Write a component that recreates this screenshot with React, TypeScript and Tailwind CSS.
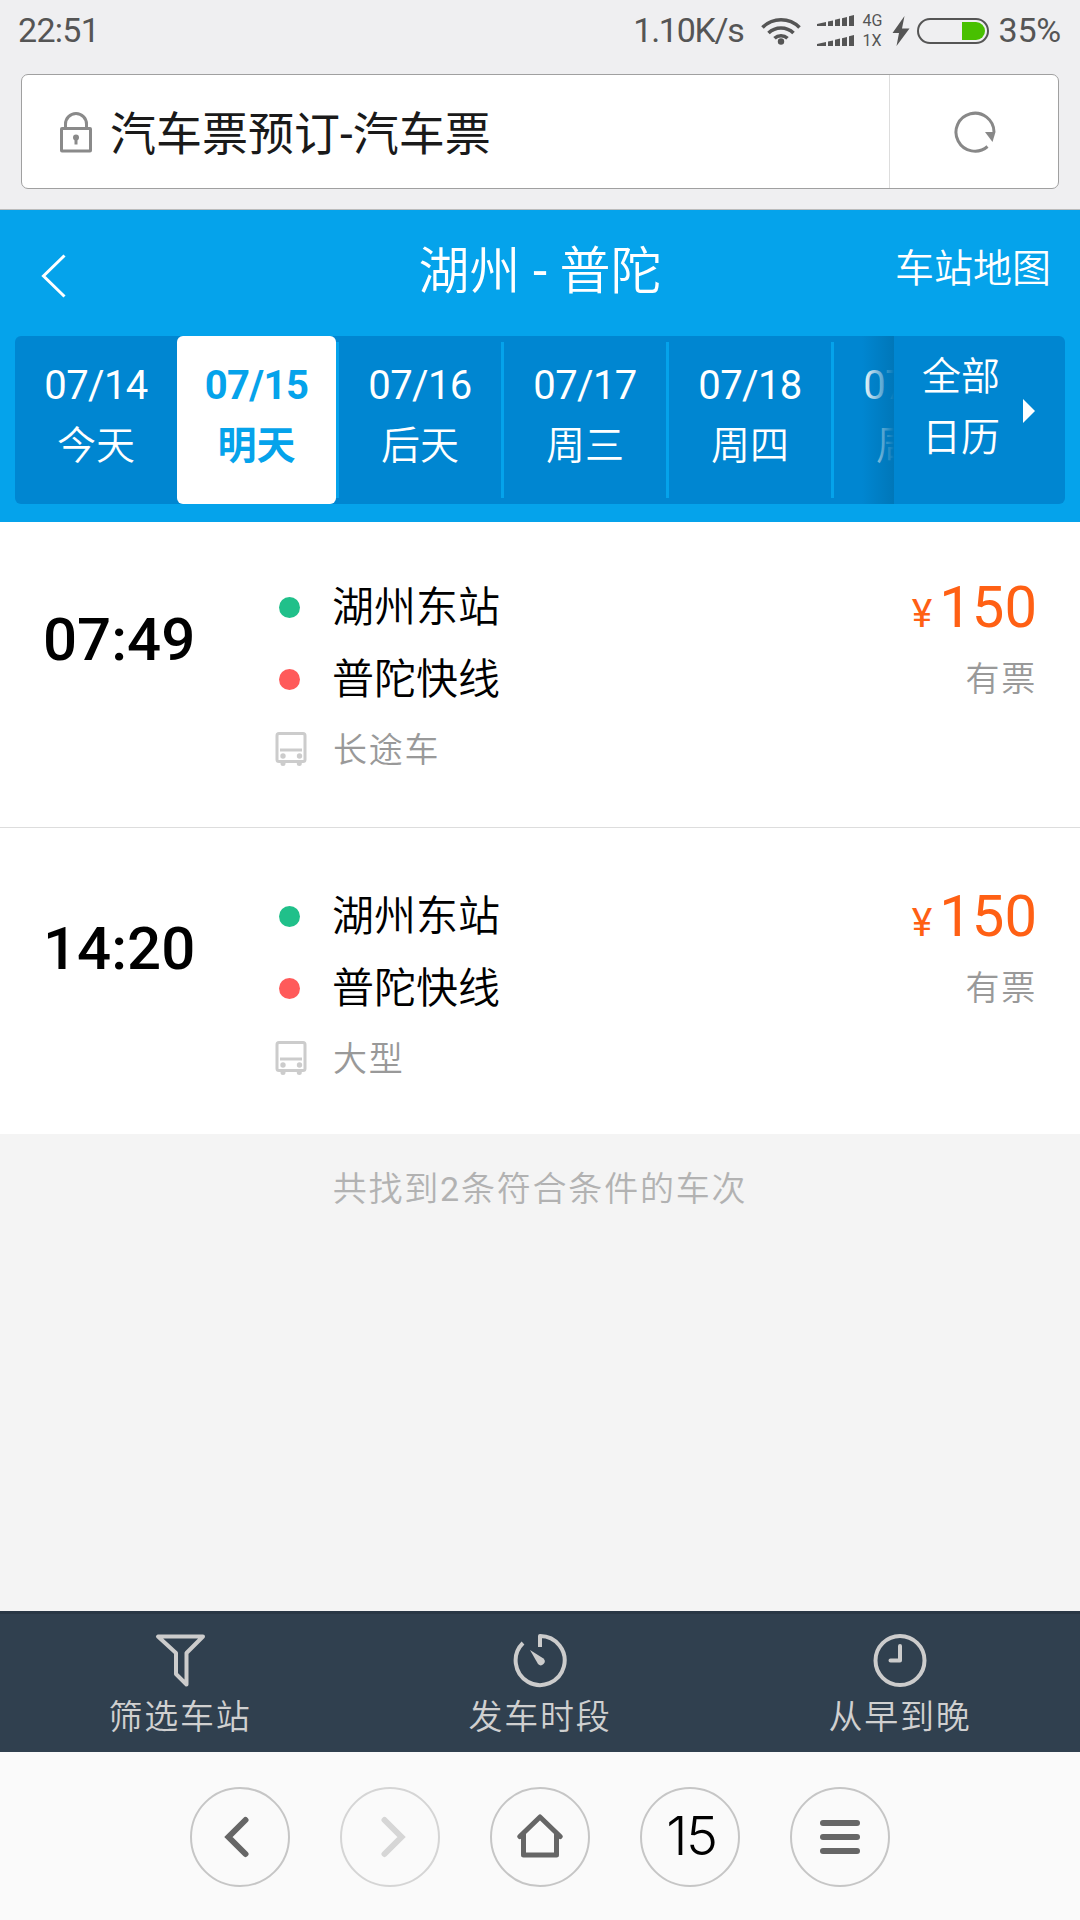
import { Fragment, ReactNode } from 'react';

type Day = { date: string; label: string };
type Trip = { time: string; from: string; to: string; kind: string; price: string; stock: string };

const days: Day[] = [
  { date: '07/14', label: '今天' },
  { date: '07/15', label: '明天' },
  { date: '07/16', label: '后天' },
  { date: '07/17', label: '周三' },
  { date: '07/18', label: '周四' },
  { date: '07/19', label: '周五' },
];

const trips: Trip[] = [
  { time: '07:49', from: '湖州东站', to: '普陀快线', kind: '长途车', price: '150', stock: '有票' },
  { time: '14:20', from: '湖州东站', to: '普陀快线', kind: '大型', price: '150', stock: '有票' },
];

function Wifi() {
  return (
    <svg className="ml-[18px] w-[40px] h-[28px]" viewBox="0 0 40 28" fill="none" stroke="#555" strokeWidth="3.6">
      <path d="M1.5 10.5 A26 26 0 0 1 38.5 10.5" />
      <path d="M7.5 16 A18 18 0 0 1 32.5 16" />
      <path d="M13.5 21.3 A9.5 9.5 0 0 1 26.5 21.3" />
      <circle cx="20" cy="24.5" r="3.2" fill="#555" stroke="none" />
    </svg>
  );
}

function SignalBars() {
  return (
    <svg className="w-[38px] h-[11px]" viewBox="0 0 38 11" fill="#555">
      <path d="M0 9 L9 7 V11 H0z" />
      <path d="M11 6.5 L16 5.4 V11 H11z" />
      <path d="M18 4.8 L23 3.6 V11 H18z" />
      <path d="M25 3.2 L30 2 V11 H25z" />
      <path d="M32 1.2 L37 0 V11 H32z" />
    </svg>
  );
}

function StatusBar() {
  return (
    <div className="flex items-center h-[61px] pl-[18px] pr-[19px] text-[34px] leading-[61px] text-[#555]">
      <span className="tracking-[-0.7px]">22:51</span>
      <span className="ml-auto tracking-[-1.3px]">1.10K/s</span>
      <Wifi />
      <div className="ml-[16px] flex flex-col gap-[9px]">
        <SignalBars />
        <SignalBars />
      </div>
      <div className="ml-[7px] w-[24px] text-[16px] leading-[20px]">
        <div>4G</div>
        <div>1X</div>
      </div>
      <svg className="ml-[6px] w-[18px] h-[30px]" viewBox="0 0 18 30" fill="#555">
        <path d="M12.5 0 L0.5 17 H7 L4.5 30 L17.5 12.5 H10z" />
      </svg>
      <svg className="ml-[7px] w-[72px] h-[26px]" viewBox="0 0 72 26">
        <rect x="1" y="1" width="70" height="24" rx="12" fill="none" stroke="#555" strokeWidth="2" />
        <path d="M45 4 H59 A9 9 0 0 1 59 22 H45z" fill="#48c000" />
      </svg>
      <span className="ml-[9px] tracking-[-0.2px]">35%</span>
    </div>
  );
}

function AddressBar() {
  return (
    <div className="mx-[21px] mt-[13px] flex h-[115px] rounded-[7px] border border-[#a0a0a0] bg-white">
      <div className="flex flex-1 items-center pl-[37px]">
        <svg className="w-[34px] h-[42px]" viewBox="0 0 34 42" fill="none" stroke="#8a8a8a" strokeWidth="3">
          <path d="M6.5 17 V13 A10.5 10.5 0 0 1 27.5 13 V17" />
          <rect x="2.5" y="17.5" width="29" height="22.5" rx="0.5" />
          <circle cx="17" cy="26.5" r="3" fill="#8a8a8a" stroke="none" />
          <path d="M17 27 V33.5" />
        </svg>
        <span className="ml-[17px] pt-[5px] text-[46px] leading-[60px] text-[#1a1a1a]">汽车票预订-汽车票</span>
      </div>
      <div className="flex w-[169px] items-center justify-center border-l border-[#ddd]">
        <svg className="ml-[2px] w-[42px] h-[42px]" viewBox="0 0 42 42">
          <path d="M33.5 35.5 A19 19 0 1 1 40 21" fill="none" stroke="#888" strokeWidth="3" />
          <path d="M31 21 H41.5 L38.5 31z" fill="#888" />
        </svg>
      </div>
    </div>
  );
}

function DayStrip() {
  return (
    <div className="mx-[15px] flex h-[168px] overflow-hidden rounded-[6px] bg-[#0086d1] text-[39px] text-white">
      <div className="relative flex w-[879px] items-center overflow-hidden">
        {days.map((day, i) => (
          <Fragment key={day.date}>
            <div
              className={
                i === 1
                  ? 'h-[168px] w-[159px] shrink-0 rounded-[6px] bg-white pt-[19px] text-center font-bold text-[#05a3eb]'
                  : 'h-[168px] w-[162px] shrink-0 pt-[19px] text-center font-[350]'
              }
            >
              <div className={i === 1 ? 'text-[40px] leading-[61px] tracking-[-0.6px]' : 'text-[40px] leading-[61px] font-normal tracking-[-0.6px]'}>
                {day.date}
              </div>
              <div className="leading-[61px]">{day.label}</div>
            </div>
            {i > 0 && <div className="h-[156px] w-[3px] shrink-0 bg-[#05a3eb]" />}
          </Fragment>
        ))}
        {/* shade where the days slide under the calendar button */}
        <div className="absolute inset-y-0 right-0 w-[32px] bg-linear-to-r from-[#0077b9]/0 to-[#0077b9]" />
      </div>
      <div className="flex flex-1 pl-[28px] font-[350]">
        <div className="pt-[11px] leading-[61px]">
          <div>全部</div>
          <div>日历</div>
        </div>
        <svg className="ml-[23px] mt-[63px] w-[12px] h-[24px]" viewBox="0 0 12 24" fill="#fff">
          <path d="M0 0 L12 12 L0 24z" />
        </svg>
      </div>
    </div>
  );
}

function PageHeader() {
  return (
    <header className="h-[312px] bg-[#05a3eb] font-[350] text-white">
      <div className="grid h-[126px] grid-cols-3">
        <svg className="ml-[41px] mt-[44px] w-[26px] h-[44px]" viewBox="0 0 26 44" fill="none" stroke="#fff" strokeWidth="3">
          <path d="M23.5 1.5 L2.5 22 L23.5 42.5" />
        </svg>
        <h1 className="whitespace-nowrap text-center text-[51px] leading-[124px]">
          湖州 <span className="font-normal">-</span> 普陀
        </h1>
        <div className="pr-[29px] text-right text-[39px] leading-[119px]">车站地图</div>
      </div>
      <DayStrip />
    </header>
  );
}

function BusIcon() {
  return (
    <svg className="-ml-[4px] w-[32px] h-[34px]" viewBox="0 0 32 34" fill="none" stroke="#ccc" strokeWidth="3">
      <rect x="2" y="1.5" width="28" height="28" rx="2" />
      <path d="M5 18 H27" />
      <circle cx="8" cy="24" r="2.7" fill="#ccc" stroke="none" />
      <circle cx="24.5" cy="24" r="2.7" fill="#ccc" stroke="none" />
      <path d="M5.5 30 H10.5 V31.5 A2.5 2.5 0 0 1 5.5 31.5z M21.8 30 H26.8 V31.5 A2.5 2.5 0 0 1 21.8 31.5z" fill="#ccc" stroke="none" />
    </svg>
  );
}

function TripRow({ trip, first }: { trip: Trip; first: boolean }) {
  return (
    <div className={first ? 'flex h-[306px] border-b border-[#ddd] pt-[49px]' : 'flex h-[306px] pt-[52px]'}>
      <div className="w-[279px] pl-[43px] pt-[33px] text-[60px] leading-[72px] font-medium text-black">{trip.time}</div>
      <div className="flex-1 font-[350] text-black">
        <div className="flex h-[72px] items-center">
          <i className="mr-[32px] h-[21px] w-[21px] rounded-full bg-[#20c08a]" />
          <span className="pt-[2px] text-[42px] leading-[72px]">{trip.from}</span>
        </div>
        <div className="flex h-[72px] items-center">
          <i className="mr-[32px] h-[21px] w-[21px] rounded-full bg-[#ff5a5a]" />
          <span className="pt-[2px] text-[42px] leading-[72px]">{trip.to}</span>
        </div>
        <div className="flex h-[68px] items-center">
          <BusIcon />
          <span className="ml-[26px] pt-[2px] text-[34px] leading-[68px] tracking-[1.8px] text-[#999]">{trip.kind}</span>
        </div>
      </div>
      <div className="pr-[43px] text-right">
        <div className="text-[58px] leading-[72px] text-[#ff6014]">
          <span className="mr-[7px] text-[39px]">¥</span>
          {trip.price}
        </div>
        <div className="text-[34px] leading-[58px] font-[350] tracking-[1.8px] text-[#999]">{trip.stock}</div>
      </div>
    </div>
  );
}

function Tool({ label, children }: { label: string; children: ReactNode }) {
  return (
    <div className="flex flex-1 flex-col items-center pt-[18px]">
      <svg className="w-[56px] h-[56px]" viewBox="0 0 56 56" fill="none" stroke="#ccc" strokeWidth="4" strokeLinecap="round" strokeLinejoin="round">
        {children}
      </svg>
      <span className="text-[34px] leading-[58px] font-[350] tracking-[1.8px] text-[#d0d0d0]">{label}</span>
    </div>
  );
}

function ToolBar() {
  return (
    <div className="flex h-[141px] border-t-3 border-[#293745] bg-[#30404f]">
      <Tool label="筛选车站">
        <path d="M6 4.5 H51 L34.5 21 V52.5 L24 42 V21z" />
      </Tool>
      <Tool label="发车时段">
        <path d="M28 15 V4 A24.5 24.5 0 1 1 11 11" strokeLinecap="butt" />
        <path d="M18 18 L31.5 26.5 A3.8 3.8 0 0 1 26 32z" fill="#ccc" stroke="none" />
      </Tool>
      <Tool label="从早到晚">
        <circle cx="28" cy="28.5" r="24.5" />
        <path d="M28 14 V28.5 H18.5" />
      </Tool>
    </div>
  );
}

function RoundButton({ dim, children }: { dim?: boolean; children: ReactNode }) {
  return (
    <button
      className={
        dim
          ? 'flex h-[100px] w-[100px] items-center justify-center rounded-full border-2 border-[#d5d5d5]'
          : 'flex h-[100px] w-[100px] items-center justify-center rounded-full border-2 border-[#c6c6c6]'
      }
    >
      {children}
    </button>
  );
}

function BrowserNav() {
  return (
    <nav className="flex h-[168px] justify-center gap-[50px] bg-[#fafafa] pt-[35px]">
      <RoundButton>
        <svg className="-ml-[8px] w-[26px] h-[42px]" viewBox="0 0 26 42" fill="none" stroke="#666" strokeWidth="6" strokeLinecap="round">
          <path d="M22.5 4 L5.5 21 L22.5 38" />
        </svg>
      </RoundButton>
      <RoundButton dim>
        <svg className="ml-[8px] w-[26px] h-[42px]" viewBox="0 0 26 42" fill="none" stroke="#d6d6d6" strokeWidth="6" strokeLinecap="round">
          <path d="M3.5 4 L20.5 21 L3.5 38" />
        </svg>
      </RoundButton>
      <RoundButton>
        <svg className="-mt-[3px] w-[46px] h-[44px]" viewBox="0 0 46 44" fill="none" stroke="#666" strokeWidth="5" strokeLinecap="round" strokeLinejoin="round">
          <path d="M2.8 22.5 L23 3 L43.2 22.5" />
          <path d="M6.5 20 V41 H39.5 V20" />
        </svg>
      </RoundButton>
      <RoundButton>
        <span className="-mt-[3px] ml-[3px] font-['Inter'] text-[54px] leading-[60px] tracking-[-1.5px] text-black font-light">15</span>
      </RoundButton>
      <RoundButton>
        <svg className="w-[40px] h-[34px]" viewBox="0 0 40 34" fill="#666">
          <rect width="40" height="6" rx="3" />
          <rect y="14" width="40" height="6" rx="3" />
          <rect y="28" width="40" height="6" rx="3" />
        </svg>
      </RoundButton>
    </nav>
  );
}

export default function App() {
  return (
    <div className="flex h-[1920px] w-[1080px] flex-col overflow-hidden bg-[#f4f4f4] font-[Roboto,'Noto_Sans_CJK_SC',sans-serif]">
      <div className="h-[210px] border-b border-[#bbb] bg-[#efeff1]">
        <StatusBar />
        <AddressBar />
      </div>
      <PageHeader />
      <main className="flex-1">
        <div className="bg-white">
          {trips.map((trip, i) => (
            <TripRow key={trip.time} trip={trip} first={i === 0} />
          ))}
        </div>
        <p className="pt-[28px] text-center text-[34px] leading-[54px] font-[350] tracking-[1.8px] text-[#b2b2b2]">
          共找到<span className="font-normal">2</span>条符合条件的车次
        </p>
      </main>
      <ToolBar />
      <BrowserNav />
    </div>
  );
}
